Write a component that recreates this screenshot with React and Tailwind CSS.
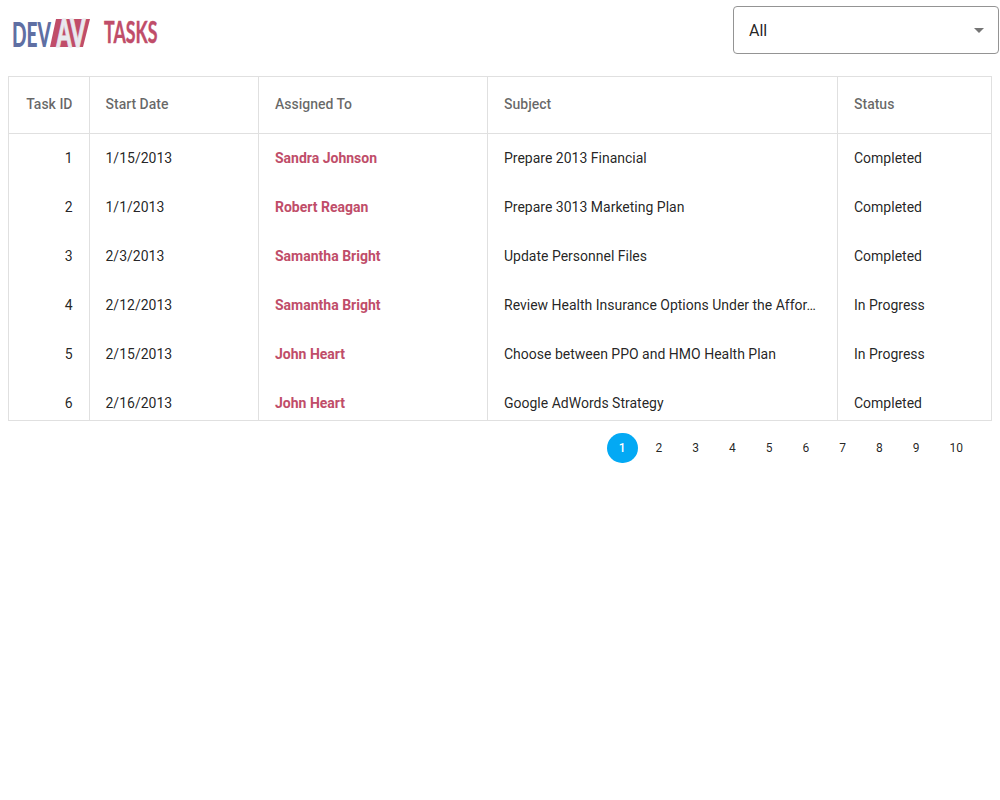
const tasks = [
  { id: 1, date: "1/15/2013", name: "Sandra Johnson", subject: "Prepare 2013 Financial", status: "Completed" },
  { id: 2, date: "1/1/2013", name: "Robert Reagan", subject: "Prepare 3013 Marketing Plan", status: "Completed" },
  { id: 3, date: "2/3/2013", name: "Samantha Bright", subject: "Update Personnel Files", status: "Completed" },
  { id: 4, date: "2/12/2013", name: "Samantha Bright", subject: "Review Health Insurance Options Under the Affor…", status: "In Progress" },
  { id: 5, date: "2/15/2013", name: "John Heart", subject: "Choose between PPO and HMO Health Plan", status: "In Progress" },
  { id: 6, date: "2/16/2013", name: "John Heart", subject: "Google AdWords Strategy", status: "Completed" },
];

const pages = [1, 2, 3, 4, 5, 6, 7, 8, 9, 10];

const columns = "grid grid-cols-[81px_169px_229px_350px_153px]";
const cell = "whitespace-nowrap border-r border-[#e0e0e0] last:border-r-0";

function Logo() {
  return (
    <svg width="170" height="54" viewBox="0 0 170 54" className="block font-['Lato',sans-serif]">
      <text x="12" y="47" fontSize="34.5" fontWeight="900" fill="#5f6fa3" textLength="39" lengthAdjust="spacingAndGlyphs">DEV</text>
      <path d="M56 19H90L83 47H50Z" fill="#c04d69" />
      <text x="56.5" y="46.5" fontSize="38.5" fontWeight="900" fill="#e9e9ee" stroke="#e9e9ee" strokeWidth="1" textLength="29" lengthAdjust="spacingAndGlyphs">AV</text>
      <text x="104" y="43" fontSize="30" fontWeight="700" fill="#c04d69" stroke="#c04d69" strokeWidth="0.4" textLength="53.5" lengthAdjust="spacingAndGlyphs">TASKS</text>
    </svg>
  );
}

export default function App() {
  return (
    <div className="h-[800px] w-[1000px] overflow-hidden bg-white font-['Roboto',sans-serif] text-sm text-black/87">
      <header className="flex h-[76px] items-start justify-between pr-px">
        <Logo />
        <button className="mt-1.5 flex h-12 w-[266px] items-center justify-between rounded border border-[#949494] pr-3.5 pl-[15px] text-base">
          <span className="pt-0.5">All</span>
          <svg width="10" height="5" viewBox="0 0 10 5" className="fill-[#757575]">
            <path d="M0 0H10L5 5Z" />
          </svg>
        </button>
      </header>

      <main className="mx-2">
        <div className="h-[345px] overflow-hidden border border-[#e0e0e0]">
          <div className={`${columns} h-[57px] border-b border-[#e0e0e0] leading-[55px] font-medium text-black/60`}>
            <div className={`${cell} pr-[16.5px] text-right`}>Task ID</div>
            <div className={`${cell} pl-[15.5px]`}>Start Date</div>
            <div className={`${cell} pl-4`}>Assigned To</div>
            <div className={`${cell} pl-4`}>Subject</div>
            <div className={`${cell} pl-4`}>Status</div>
          </div>
          {tasks.map((t) => (
            <div key={t.id} className={`${columns} h-[49px] leading-[49px]`}>
              <div className={`${cell} pr-[16.5px] text-right`}>{t.id}</div>
              <div className={`${cell} pl-[15.5px]`}>{t.date}</div>
              <div className={`${cell} pl-4 font-bold text-[#c04d69]`}>{t.name}</div>
              <div className={`${cell} pl-4`}>{t.subject}</div>
              <div className={`${cell} pl-4`}>{t.status}</div>
            </div>
          ))}
        </div>

        <nav className="flex justify-end gap-1.5 pt-3 pr-[17px] text-xs">
          {pages.map((p) => (
            <button
              key={p}
              className={
                p === 1
                  ? "flex h-[30px] items-center rounded-full bg-[#03a9f4] px-3 font-medium text-white"
                  : "flex h-[30px] items-center rounded-full px-3"
              }
            >
              {p}
            </button>
          ))}
        </nav>
      </main>
    </div>
  );
}
